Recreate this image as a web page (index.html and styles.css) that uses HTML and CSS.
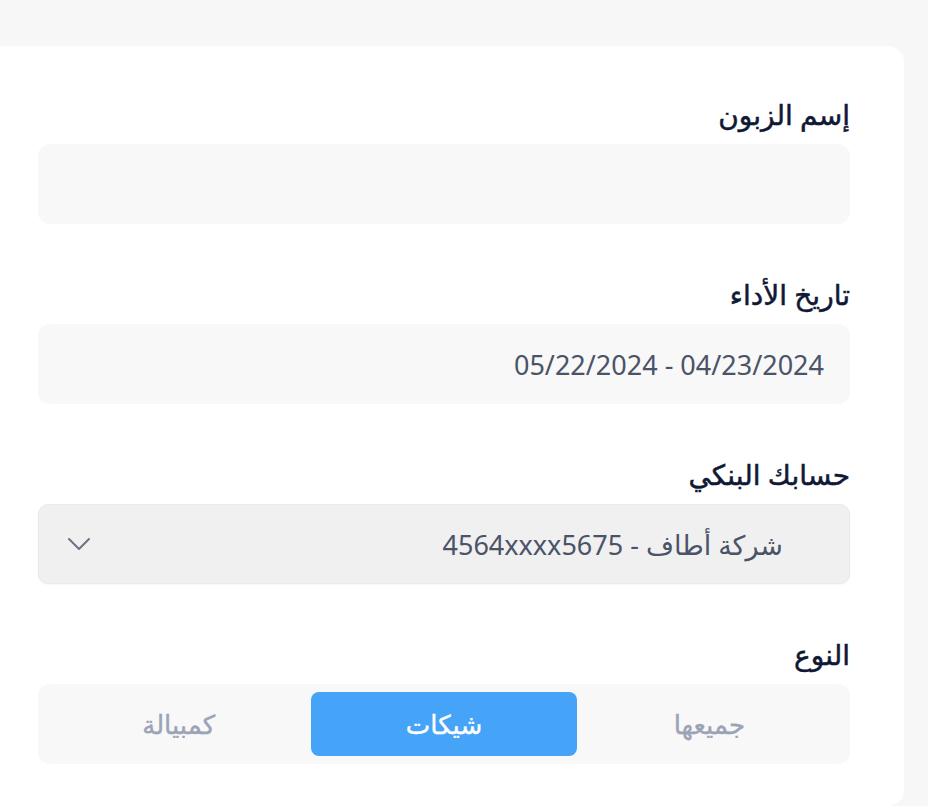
FILE: index.html
```html
<!DOCTYPE html>
<html lang="ar" dir="rtl">
<head>
  <meta charset="UTF-8">
  <meta name="viewport" content="width=device-width, initial-scale=1.0">
  <title>فلترة الأوراق التجارية</title>
  <link rel="stylesheet" href="styles.css">
</head>
<body>
  <div class="panel">
    <div class="field">
      <label class="label">إسم الزبون</label>
      <div class="input"></div>
    </div>

    <div class="field">
      <label class="label">تاريخ الأداء</label>
      <div class="input"><span dir="ltr">05/22/2024 - 04/23/2024</span></div>
    </div>

    <div class="field">
      <label class="label">حسابك البنكي</label>
      <div class="select">
        <span>شركة أطاف - 4564xxxx5675</span>
        <svg class="chevron" width="24" height="14" viewBox="0 0 24 14">
          <path d="M2 2 L12 12 L22 2" fill="none" stroke="#6b7280" stroke-width="2" stroke-linecap="round" stroke-linejoin="round"/>
        </svg>
      </div>
    </div>

    <div class="field">
      <label class="label">النوع</label>
      <div class="tabs">
        <div class="tab">جميعها</div>
        <div class="tab active">شيكات</div>
        <div class="tab">كمبيالة</div>
      </div>
    </div>
  </div>
</body>
</html>
```

FILE: styles.css
```css
body {
  font-family: "Noto Sans", "DejaVu Sans", sans-serif;
  margin: 0;
  padding: 46px 24px 0 0;
  background: #f7f7f7;
  overflow: hidden;
}

.panel {
  background: #fff;
  border-radius: 16px;
  margin-left: -20px;
  padding: 52px 54px 0 58px;
  height: 760px;
  box-sizing: border-box;
}

.field {
  margin-bottom: 54px;
}

.label {
  display: block;
  font-size: 28px;
  line-height: 32px;
  color: #0f1834;
  -webkit-text-stroke: 0.5px #0f1834;
  margin-bottom: 14px;
}

.input {
  height: 80px;
  box-sizing: border-box;
  background: #f8f8f8;
  border-radius: 12px;
  padding: 0 26px;
  display: flex;
  align-items: center;
  font-size: 27px;
  color: #4b5368;
}

.select {
  height: 80px;
  box-sizing: border-box;
  background: #f0f0f0;
  border: 1px solid #ebebeb;
  border-radius: 10px;
  box-shadow: 0 1px 2px rgba(0, 0, 0, 0.04);
  padding: 0 66px 0 28px;
  display: flex;
  align-items: center;
  justify-content: space-between;
  font-size: 27px;
  color: #4b5368;
}

.chevron {
  display: block;
}

.tabs {
  height: 80px;
  box-sizing: border-box;
  background: #f8f8f8;
  border-radius: 12px;
  padding: 8px;
  display: grid;
  grid-template-columns: repeat(3, 1fr);
}

.tab {
  display: flex;
  align-items: center;
  justify-content: center;
  border-radius: 8px;
  font-size: 26px;
  color: #9ba3b6;
  -webkit-text-stroke: 0.4px #9ba3b6;
}

.tab.active {
  background: #45a3f8;
  color: #fff;
  -webkit-text-stroke: 0.4px #fff;
}
```
